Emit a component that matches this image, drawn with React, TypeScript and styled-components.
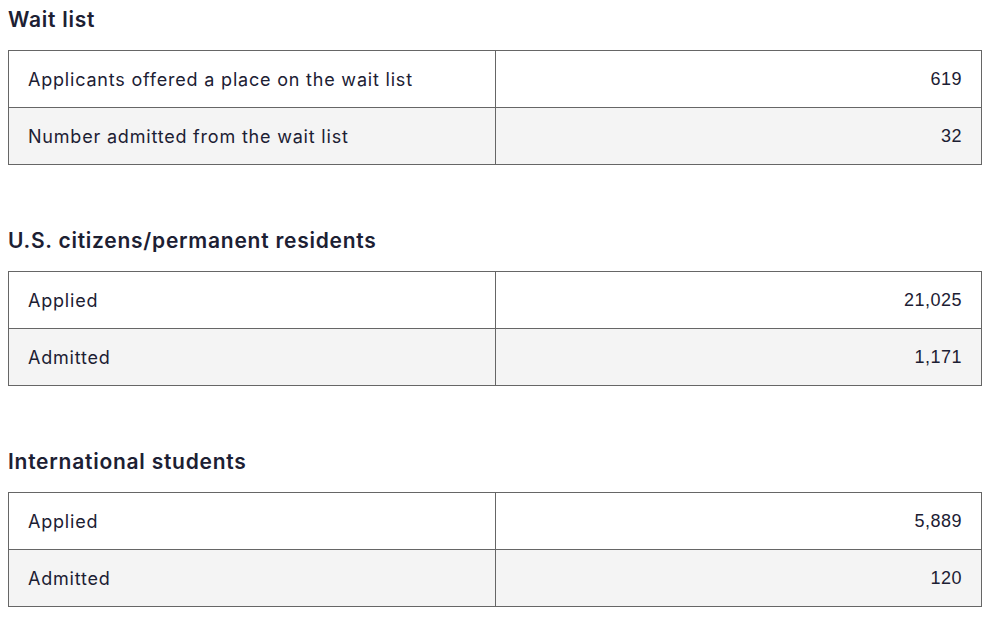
import React from "react";
import styled, { createGlobalStyle } from "styled-components";

const Global = createGlobalStyle`
  body {
    margin: 8px;
    background: #ffffff;
    font-family: Inter, "Open Sans", sans-serif;
    color: #1c2033;
  }
`;

const Page = styled.div`
  display: flex;
  flex-direction: column;
  gap: 64px;
`;

const Section = styled.section`
  display: flex;
  flex-direction: column;
`;

const Heading = styled.h2`
  margin: 0 0 18px 0;
  font-family: Inter, sans-serif;
  font-size: 21px;
  line-height: 24px;
  font-weight: 600;
  letter-spacing: 0.75px;
  color: #1c2033;
`;

const Table = styled.table`
  width: 100%;
  border-collapse: collapse;
  table-layout: fixed;
`;

const Row = styled.tr<{ $alt?: boolean }>`
  background: ${(p) => (p.$alt ? "#f4f4f4" : "#ffffff")};
`;

const LabelCell = styled.td`
  height: 57px;
  padding: 0 19px;
  border: 1px solid #666666;
  font-family: Inter, sans-serif;
  font-size: 18px;
  letter-spacing: 0.8px;
  color: #1c2033;
  width: 50%;
  box-sizing: border-box;
`;

const ValueCell = styled.td`
  height: 57px;
  padding: 0 19px;
  border: 1px solid #666666;
  font-family: "Liberation Sans", Arial, sans-serif;
  font-size: 18px;
  letter-spacing: 0.5px;
  color: #1c2033;
  text-align: right;
  box-sizing: border-box;
`;

const data = [
  {
    title: "Wait list",
    rows: [
      ["Applicants offered a place on the wait list", "619"],
      ["Number admitted from the wait list", "32"],
    ],
  },
  {
    title: "U.S. citizens/permanent residents",
    rows: [
      ["Applied", "21,025"],
      ["Admitted", "1,171"],
    ],
  },
  {
    title: "International students",
    rows: [
      ["Applied", "5,889"],
      ["Admitted", "120"],
    ],
  },
];

export default function App() {
  return (
    <>
      <Global />
      <Page>
        {data.map((s) => (
          <Section key={s.title}>
            <Heading>{s.title}</Heading>
            <Table>
              <tbody>
                {s.rows.map((r, i) => (
                  <Row key={r[0]} $alt={i % 2 === 1}>
                    <LabelCell>{r[0]}</LabelCell>
                    <ValueCell>{r[1]}</ValueCell>
                  </Row>
                ))}
              </tbody>
            </Table>
          </Section>
        ))}
      </Page>
    </>
  );
}
